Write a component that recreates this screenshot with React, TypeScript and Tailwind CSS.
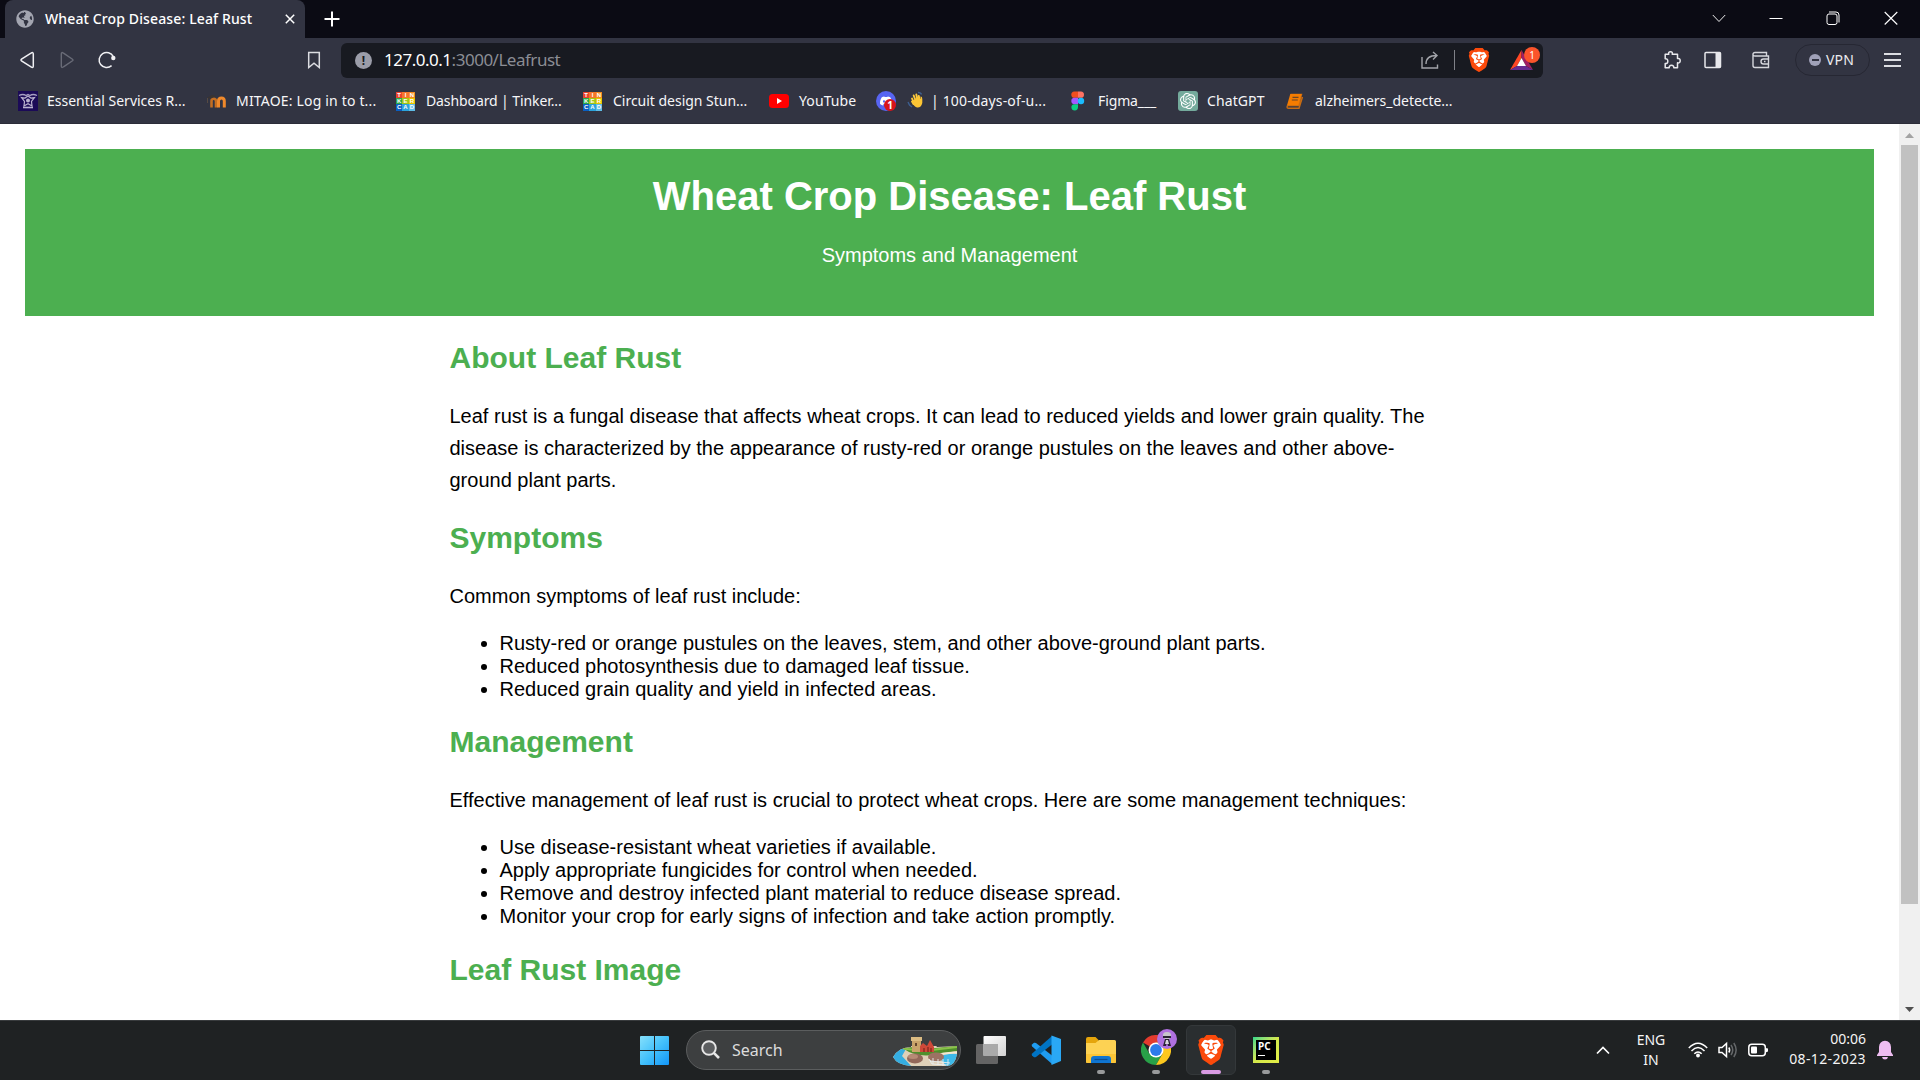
import type { ReactNode } from "react";
import { FaGlobeAmericas } from "react-icons/fa";
import { SiBrave, SiDiscord, SiOpenai } from "react-icons/si";

const UI = "font-['Noto_Sans','Open_Sans',sans-serif]";

function BackIcon() {
  return (
    <svg width="40" height="20" viewBox="0 0 40 20" className="h-5 w-10 shrink-0" fill="none">
      <path d="M14 3.2Q16.300 1.600 16.300 4V16Q16.300 18.400 14 16.800L4.500 10.800Q3.500 10 4.500 9.200Z" stroke="#f0f0f3" strokeWidth="1.5" />
    </svg>
  );
}

function ForwardIcon() {
  return (
    <svg width="40" height="20" viewBox="0 0 40 20" className="h-5 w-10 shrink-0" fill="none">
      <path d="M6.500 3.200Q4.300 1.600 4.300 4V16Q4.300 18.400 6.500 16.800L15.500 10.800Q16.500 10 15.500 9.200Z" stroke="#696b77" strokeWidth="1.4" />
    </svg>
  );
}

function ReloadIcon() {
  return (
    <svg width="20" height="20" viewBox="0 0 20 20" className="h-5 w-5 shrink-0" fill="none">
      <path d="M14.600 15.600A7.500 7.500 0 1 1 16.300 6.500" stroke="#f0f0f3" strokeWidth="1.5" />
      <circle cx="16.300" cy="8" r="2.200" fill="#f0f0f3" />
    </svg>
  );
}

function LionIcon({ className }: { className: string }) {
  return (
    <div className={"relative " + className}>
      <svg viewBox="0 0 24 24" className="absolute inset-0 h-full w-full">
        <path d="M5 4L12 2L19 4L20 8L17 19L12 22L7 19L4 8Z" fill="#fff" />
      </svg>
      <SiBrave className="absolute inset-0 h-full w-full text-[#fb4a0b]" />
    </div>
  );
}

function TinkercadIcon() {
  const cells = [
    ["T", "#e8432c"], ["I", "#f5752a"], ["N", "#f58a1f"],
    ["K", "#2ba84a"], ["E", "#a5c614"], ["R", "#e8c400"],
    ["C", "#0a5fc2"], ["A", "#2ba3dc"], ["D", "#5fbce6"],
  ];
  return (
    <div className="mr-px grid h-[19px] w-[19px] shrink-0 grid-cols-3 grid-rows-3 overflow-hidden font-['Liberation_Sans',sans-serif] text-[6px] leading-[6px] font-bold text-white">
      {cells.map(([c, color]) => (
        <span key={c} className="flex min-h-0 items-center justify-center" style={{ backgroundColor: color }}>{c}</span>
      ))}
    </div>
  );
}

function EssentialIcon() {
  return (
    <svg viewBox="0 0 20 20" className="h-5 w-5">
      <rect width="20" height="20" fill="#1b0a57" />
      <path d="M1 4.500Q5 2.500 8 4.500L10 3.500L12 4.500Q15 2.500 19 4.500" stroke="#a79fc2" strokeWidth="1.300" fill="none" />
      <path d="M3.500 6.500L7 7L10 5L13 7L16.500 6.500L13.500 10.500L14 15L10 12.800L6 15L6.500 10.500Z" stroke="#b9b1cf" strokeWidth="1.200" fill="none" />
      <path d="M5 16.500H15" stroke="#b9b1cf" strokeWidth="1.600" />
      <circle cx="10" cy="9.500" r="2" fill="#b9b1cf" />
    </svg>
  );
}

function MoodleIcon() {
  return (
    <svg viewBox="0 0 20 20" className="h-5 w-5" fill="none">
      <path d="M5.500 16.500V10Q5.500 7.800 7.500 7.800Q10 7.800 10 10V16.500" stroke="#c46e22" strokeWidth="2.600" />
      <path d="M12.500 16.500V10Q12.500 7 15.500 7Q18.300 7 18.300 10V16.500" stroke="#f0892b" strokeWidth="3" />
      <path d="M1 7L6 4L10 5L5 7.500Z" fill="#3b3430" />
      <path d="M1.500 7V12" stroke="#574a42" />
    </svg>
  );
}

function YoutubeIcon() {
  return (
    <svg viewBox="0 0 20 20" className="h-5 w-5">
      <rect y="3" width="20" height="14" rx="3.500" fill="#f00" />
      <path d="M8 7L13 10L8 13Z" fill="#fff" />
    </svg>
  );
}

function DiscordIcon() {
  return (
    <div className="relative flex h-5 w-5 items-center justify-center rounded-full bg-[#5865f2]">
      <SiDiscord className="h-[12px] w-[12px] text-white" />
      <span className={"absolute right-0 bottom-0 flex h-3 w-3 items-center justify-center rounded-full bg-[#d8131b] text-[10px] leading-none font-bold text-white " + UI}>1</span>
    </div>
  );
}

function WaveIcon() {
  return (
    <svg viewBox="0 0 16 18" className="h-[18px] w-4 shrink-0" fill="none">
      <path d="M6.500 11L5 7.500M8 8L6.700 4.500M10.200 7.500L9.300 3.500M12.300 8L11.800 5M6.500 13L5 10.500" stroke="#fcc93d" strokeWidth="1.900" strokeLinecap="round" />
      <path d="M5 10L11 6L13.500 8V5.500Q15.300 5 15.300 8V12Q14 17 10 16.500Q6.500 15.500 5 10Z" fill="#fcc534" />
      <path d="M1 11L2.500 14L5 16M11 1.500Q14 1.500 14.500 3.500" stroke="#3d5f91" strokeWidth="1.400" />
    </svg>
  );
}

function FigmaIcon() {
  return (
    <svg viewBox="0 0 20 20" className="h-5 w-5">
      <path d="M10 .5H6.300a3.170 3.170 0 0 0 0 6.330H10Z" fill="#f24e1e" />
      <path d="M10 .5H13a3.170 3.170 0 0 1 0 6.330H10Z" fill="#ff7262" />
      <path d="M10 6.830H6.300a3.170 3.170 0 0 0 0 6.330H10Z" fill="#a259ff" />
      <circle cx="13" cy="10" r="3.170" fill="#1abcfe" />
      <path d="M6.300 13.160H10v3.170a3.300 3.170 0 1 1-3.700-3.170Z" fill="#0acf83" />
    </svg>
  );
}

function BookIcon() {
  return (
    <svg viewBox="0 0 20 20" className="h-5 w-5">
      <path d="M6.500 3.500H17.500L14.500 14.500H4.500Q3 14.500 3 16Q3 17.300 4.500 17.300H15L18.500 6" fill="none" stroke="#c96c12" strokeWidth="1.400" />
      <path d="M6.300 3H17.500L14.500 14.300H3Z" fill="#f57c00" />
      <path d="M8.500 6.300H14.500M7.800 9H13.800" stroke="#6b4426" strokeWidth="1.200" />
    </svg>
  );
}

function Bookmark({ icon, label, className, textClass }: { icon: ReactNode; label: ReactNode; className: string; textClass: string }) {
  return (
    <div className={"flex shrink-0 items-center " + className}>
      <div className="flex w-5 shrink-0 items-center justify-center">{icon}</div>
      <span className={"ml-[10px] flex items-center pb-[2px] text-[14px] whitespace-nowrap text-[#f6f6f8] " + textClass}>{label}</span>
    </div>
  );
}

function TabStrip() {
  return (
    <div className="flex h-[38px] bg-[#0b0b14] text-white">
      <div className="ml-[5px] flex w-[300px] items-center rounded-t-lg bg-[#323442]">
        <FaGlobeAmericas className="ml-[11px] h-[18px] w-[18px] text-[#a3a5b0]" />
        <span className="ml-[11px] w-[230px] pb-[2px] text-[14px] font-medium tracking-[0.13px] whitespace-nowrap">Wheat Crop Disease: Leaf Rust</span>
        <svg viewBox="0 0 10 10" className="ml-[10px] h-[10px] w-[10px]"><path d="M.8.8L9.200 9.200M9.200.8L.8 9.200" stroke="#fff" strokeWidth="1.500" /></svg>
      </div>
      <div className="flex w-[54px] items-center justify-center">
        <svg viewBox="0 0 16 16" className="h-4 w-4"><path d="M8 .5V15.500M.5 8H15.500" stroke="#fff" strokeWidth="2" /></svg>
      </div>
      <div className="ml-auto flex h-[38px] items-center pr-[22px] pb-[2px]">
        <svg viewBox="0 0 14 14" className="mr-[43px] h-[14px] w-[14px]"><path d="M.8 4L7 10.500L13.200 4" stroke="#eee" fill="none" /></svg>
        <svg viewBox="0 0 14 14" className="mr-[43px] h-[14px] w-[14px]"><path d="M.5 7.500H13.500" stroke="#fff" /></svg>
        <svg viewBox="0 0 14 14" className="mr-[44px] h-[14px] w-[14px]" fill="none" stroke="#fff"><rect x="1" y="3" width="10" height="10.500" rx="2" /><path d="M3 1H10Q13 1 13 4V11.500" /></svg>
        <svg viewBox="0 0 14 14" className="h-[14px] w-[14px]"><path d="M.7 1L13.300 13.500M13.300 1L.7 13.500" stroke="#fff" strokeWidth="1.100" /></svg>
      </div>
    </div>
  );
}

function Toolbar() {
  return (
    <div className="flex h-[45px] items-center bg-[#323442]">
      <div className="mb-px ml-[17px] flex items-center">
        <BackIcon />
        <ForwardIcon />
        <ReloadIcon />
      </div>
      <svg viewBox="0 0 14 18" className="mb-px ml-[190px] h-[18px] w-[14px]" fill="none"><path d="M1.700 1.500H12.300V16.500L7 12.200L1.700 16.500Z" stroke="#dcdde2" strokeWidth="1.500" /></svg>
      <div className="ml-[20px] flex h-[35px] w-[1202px] items-center rounded-md bg-[#181a21]">
        <div className={"ml-[14px] flex h-[17px] w-[17px] items-center justify-center rounded-full bg-[#9b9da9] text-[12px] leading-none font-bold text-[#181a21] " + UI}>!</div>
        <div className="ml-[12px] pb-px text-[17px] tracking-[-0.49px] text-white">
          127.0.0.1<span className="text-[#8b8d94]">:3000/Leafrust</span>
        </div>
        <svg viewBox="0 0 18 18" className="mb-px ml-auto h-[18px] w-[18px]" fill="none" stroke="#a2a4aa" strokeWidth="1.400">
          <path d="M1 6V17H16.500V13.500" /><path d="M5 13Q5 4.500 15.500 4.500M12 1L16 4.500L12 8.500" />
        </svg>
        <div className="mb-px ml-[15px] h-5 w-px bg-[#7f8188]" />
        <LionIcon className="mb-px ml-[12px] h-6 w-6" />
        <div className="relative mr-[10px] mb-px ml-[19px] h-[20px] w-[23px]">
          <svg viewBox="0 0 23 20" className="h-5 w-[23px]">
            <path d="M11.500 0L0 20L7 16L11.500 8Z" fill="#ff4724" />
            <path d="M11.500 0L23 20L16 16L11.500 8Z" fill="#9e1f63" />
            <path d="M0 20H23L16 16H7Z" fill="#662d91" />
            <path d="M11.500 8L7 16H16Z" fill="#fff" />
          </svg>
          <span className={"absolute -top-[3px] left-[14px] flex h-4 w-4 items-center justify-center rounded-full bg-[#fb542b] text-[10px] leading-none text-white " + UI}>1</span>
        </div>
      </div>
      <svg viewBox="0 0 18 18" className="mb-px ml-[120px] h-[18px] w-[18px]" fill="none" stroke="#e8e8ec" strokeWidth="1.500">
        <path d="M2.200 3.200H5.800Q5 .8 7.500 .8Q10 .8 9.200 3.200H14.500V7.500Q17.200 7 17.200 9.700Q17.200 12.300 14.500 11.800V16.800H10.800Q11 14.300 8.500 14.300Q6 14.300 6.200 16.800H2.200V12.500Q4.800 12.800 4.800 10.200Q4.800 7.600 2.200 7.800Z" strokeLinejoin="round" />
      </svg>
      <svg viewBox="0 0 18 18" className="mb-px ml-[23px] h-[18px] w-[18px]"><rect x="1" y="1.500" width="15.500" height="15" rx="1" fill="none" stroke="#e8e8ec" strokeWidth="1.500" /><rect x="11.500" y="1.500" width="5" height="15" fill="#e8e8ec" /></svg>
      <svg viewBox="0 0 18 18" className="mb-px ml-[30px] h-[18px] w-[18px]" fill="none" stroke="#d5d6dc" strokeWidth="1.400">
        <path d="M1 3V14.500Q1 16.500 3 16.500H16.500V5H3Q1 5 1 3.200Q1 1.500 3 1.500H14.500V5" /><path d="M16.500 8H11.500Q9 8 9 10.500Q9 13 11.500 13H16.500M12 10.500H13.500" />
      </svg>
      <div className="mb-px ml-[25px] flex h-[32px] w-[75px] items-center rounded-full border border-[#262733]">
        <div className="ml-[13px] flex h-3 w-3 items-center justify-center rounded-full bg-[#a0a1b8]"><div className="h-[2px] w-[7px] bg-[#323442]" /></div>
        <span className="ml-[5px] pb-[2px] text-[14px] tracking-[0.2px] text-[#ececf0]">VPN</span>
      </div>
      <div className="mb-px ml-[14px] flex w-[17px] flex-col gap-[4.500px]">
        <div className="h-[1.500px] bg-[#dcdde2]" /><div className="h-[1.500px] bg-[#dcdde2]" /><div className="h-[1.500px] bg-[#dcdde2]" />
      </div>
    </div>
  );
}

function BookmarksBar() {
  return (
    <div className="flex h-[41px] items-start border-b border-[#2b2c38] bg-[#323442] pt-[8px] pl-[18px]">
      <div className="flex h-5 items-center">
        <Bookmark icon={<EssentialIcon />} label="Essential Services R..." className="w-[188px]" textClass="tracking-[0px] -translate-x-px" />
        <Bookmark icon={<MoodleIcon />} label="MITAOE: Log in to t..." className="w-[190px]" textClass="tracking-[0.18px]" />
        <Bookmark icon={<TinkercadIcon />} label="Dashboard | Tinker..." className="w-[187px]" textClass="tracking-[-0.1px]" />
        <Bookmark icon={<TinkercadIcon />} label="Circuit design Stun..." className="w-[186px]" textClass="tracking-[-0.02px]" />
        <Bookmark icon={<YoutubeIcon />} label="YouTube" className="w-[107px]" textClass="tracking-[0.1px]" />
        <Bookmark icon={<DiscordIcon />} label={<><WaveIcon /><span className="ml-[8px]">| 100-days-of-u...</span></>} className="w-[192px]" textClass="tracking-[0.15px] pl-[1px]" />
        <Bookmark icon={<FigmaIcon />} label="Figma___" className="w-[110px]" textClass="tracking-[-0.12px]" />
        <Bookmark icon={<div className="flex h-5 w-5 items-center justify-center rounded-[3px] bg-[#74aa9c]"><SiOpenai className="h-4 w-4 text-white" /></div>} label="ChatGPT" className="w-[106px]" textClass="tracking-[0.1px] -translate-x-px" />
        <Bookmark icon={<BookIcon />} label="alzheimers_detecte..." className="w-[180px]" textClass="tracking-[-0.04px] pl-px" />
      </div>
    </div>
  );
}

function H2({ children, tight }: { children: ReactNode; tight?: boolean }) {
  return <h2 className={"mb-[25px] text-[30px] leading-[34px] font-bold text-[#4caf50] " + (tight ? "mt-6" : "mt-[25px]")}>{children}</h2>;
}

function Para({ children }: { children: ReactNode }) {
  return <p className="my-5 text-[20px] leading-8 whitespace-nowrap">{children}</p>;
}

function List({ items }: { items: string[] }) {
  return (
    <ul className="my-5 list-disc pl-[50px] text-[20px] leading-[23px]">
      {items.map((t) => <li key={t}>{t}</li>)}
    </ul>
  );
}

function Page() {
  return (
    <div className="flex h-[896px] overflow-hidden bg-white">
      <main className="w-[1899px] overflow-hidden p-[25px] font-['Liberation_Sans',Arial,sans-serif] text-black">
        <header className="flex h-[167px] flex-col items-center bg-[#4caf50] pt-[25px] text-white">
          <h1 className="text-[40px] leading-[45px] font-bold">Wheat Crop Disease: Leaf Rust</h1>
          <p className="mt-[20px] text-[20px] leading-8">Symptoms and Management</p>
        </header>
        <article className="mx-auto w-[1000px]">
          <H2>About Leaf Rust</H2>
          <Para>
            Leaf rust is a fungal disease that affects wheat crops. It can lead to reduced yields and lower grain quality. The<br />
            disease is characterized by the appearance of rusty-red or orange pustules on the leaves and other above-<br />
            ground plant parts.
          </Para>
          <H2>Symptoms</H2>
          <Para>Common symptoms of leaf rust include:</Para>
          <List items={["Rusty-red or orange pustules on the leaves, stem, and other above-ground plant parts.", "Reduced photosynthesis due to damaged leaf tissue.", "Reduced grain quality and yield in infected areas."]} />
          <H2 tight>Management</H2>
          <Para>Effective management of leaf rust is crucial to protect wheat crops. Here are some management techniques:</Para>
          <List items={["Use disease-resistant wheat varieties if available.", "Apply appropriate fungicides for control when needed.", "Remove and destroy infected plant material to reduce disease spread.", "Monitor your crop for early signs of infection and take action promptly."]} />
          <H2>Leaf Rust Image</H2>
        </article>
      </main>
      <div className="flex w-[21px] flex-col items-center bg-[#f0f0f0]">
        <svg viewBox="0 0 21 21" className="h-[21px] w-[21px] shrink-0"><path d="M6 14L10.500 9L15 14Z" fill="#a3a3a3" /></svg>
        <div className="h-[759px] w-[17px] bg-[#c1c1c1]" />
        <svg viewBox="0 0 21 21" className="mt-auto h-[21px] w-[21px] shrink-0"><path d="M6 8L10.500 13L15 8Z" fill="#505050" /></svg>
      </div>
    </div>
  );
}

function CastleIcon() {
  return (
    <svg viewBox="0 0 64 30" className="h-[30px] w-16">
      <defs><clipPath id="scene"><path d="M0 20Q6 10 18 10V0H30V6L38 2L44 10L64 9V17Q62 29 54 29H18Q4 28 0 20Z" /></clipPath></defs>
      <g clipPath="url(#scene)">
        <rect y="9" width="64" height="21" fill="#dfd0b8" />
        <path d="M0 20Q5 10 13 12L9 19L19 30H0Z" fill="#35aee2" />
        <path d="M11 12Q20 8 32 12L64 9V14L40 18Q22 20 11 12Z" fill="#4f8f2c" />
        <path d="M10 11.500L30 14L64 10" stroke="#8bc34a" strokeWidth="2" fill="none" />
        <path d="M46 20Q54 16 64 17V30H54Z" fill="#3db9e8" />
        <path d="M40 19Q52 15 64 15.500" stroke="#f3e8d0" strokeWidth="2" fill="none" />
        <path d="M19 1H28V15H19Z" fill="#c9a36a" /><path d="M18 0H29V4H18Z" fill="#dcbc83" />
        <path d="M22 6h2v3h-2Z" fill="#67472d" />
        <path d="M27 9L30 6L34 9L37 3L41 10V15H27Z" fill="#cf4838" />
        <path d="M31 11v4M35 10v5M38 11v4" stroke="#84291f" strokeWidth="1.300" />
      </g>
      <ellipse cx="22" cy="21.500" rx="8" ry="5" fill="#93685a" /><ellipse cx="20" cy="19.500" rx="5" ry="2.500" fill="#b68b75" />
      <ellipse cx="43" cy="20" rx="8" ry="4.500" fill="#9c7263" />
      <path d="M36 22L39 27L55 28M37 24L57 26M40 21V27M45 22V28M50 22V29M55 22V28" stroke="#e9eef1" strokeWidth=".9" fill="none" />
    </svg>
  );
}

function TaskCell({ children, dot }: { children: ReactNode; dot?: boolean }) {
  return (
    <div className="relative flex h-[60px] w-[55px] items-center justify-center pl-px">
      {children}
      {dot && <span className="absolute bottom-[6px] left-[24px] h-1 w-2 rounded-full bg-[#989a9b]" />}
    </div>
  );
}

function Taskbar() {
  return (
    <div className="flex h-[60px] items-center bg-[#1f2223] shadow-[inset_0_1px_0_#383b3d]">
      <svg viewBox="0 0 29 29" className="mt-px ml-[640px] h-[29px] w-[29px] shrink-0">
        <defs><linearGradient id="win" x1="0" y1="0" x2="29" y2="29" gradientUnits="userSpaceOnUse"><stop stopColor="#86e0fb" /><stop offset=".5" stopColor="#44c1fb" /><stop offset="1" stopColor="#1296f8" /></linearGradient></defs>
        <path d="M1 0H14V14H0V1Q0 0 1 0ZM15 0H28Q29 0 29 1V14H15ZM0 15H14V29H1Q0 29 0 28ZM15 15H29V28Q29 29 28 29H15Z" fill="url(#win)" />
      </svg>
      <div className="ml-[17px] flex h-10 w-[275px] shrink-0 items-center rounded-full border border-[#5b5d5e] bg-[#3d3f40]">
        <svg viewBox="0 0 20 20" className="ml-[14px] h-5 w-5" fill="none"><circle cx="8" cy="8" r="6.800" stroke="#e7e7e7" strokeWidth="1.900" fill="#5c5e60" /><path d="M12.800 12.800L18 18" stroke="#e7e7e7" strokeWidth="2.600" /></svg>
        <span className="ml-[11px] text-[16px] text-[#dcdcdc]">Search</span>
        <div className="mt-[3px] mr-[3px] ml-auto"><CastleIcon /></div>
      </div>
      <div className="ml-[2px] flex shrink-0">
        <TaskCell>
          <svg viewBox="0 0 30 28" className="h-7 w-[30px]">
            <defs><linearGradient id="tv" x1="0" y1="0" x2="1" y2="1"><stop stopColor="#fff" /><stop offset="1" stopColor="#d2d2d2" /></linearGradient></defs>
            <rect y="8" width="22" height="20" rx="1.500" fill="#646464" /><rect x="7.500" width="22.500" height="20" rx="1" fill="url(#tv)" /><path d="M7.500 8H22V20H7.500Z" fill="#aaa" />
          </svg>
        </TaskCell>
        <TaskCell>
          <svg viewBox="0 0 30 30" className="h-[30px] w-[30px]">
            <path d="M1 9.500L3 7.800Q4 7.500 5 8L21 20.500V29L1.200 11.500Q.3 10.500 1 9.500Z" fill="#1f9cf0" />
            <path d="M1 20.500L3 22.200Q4 22.500 5 22L21 9.500V1L1.200 18.500Q.3 19.500 1 20.500Z" fill="#0074c4" />
            <path d="M20.500 .5L30 4V26L20.500 30V20.500V9.500Z" fill="#2aa8f5" />
          </svg>
        </TaskCell>
        <TaskCell dot>
          <svg viewBox="0 -1 30 28" className="h-7 w-[30px]">
            <path d="M0 6V2Q0 0 2 0H9.500L12.500 3V8H0Z" fill="#e5a50b" /><path d="M0 6H9.500L13 3H28.500Q30 3 30 4.500V25Q30 26 28.500 26H1.500Q0 26 0 24.500Z" fill="#fdd253" /><path d="M0 17H30V25Q30 26 28.500 26H1.500Q0 26 0 24.500Z" fill="#fbc536" /><path d="M5 26V22Q5 19 8 19H22Q25 19 25 22V26Z" fill="#0f75d1" /><path d="M8.500 22.500H21.500" stroke="#0a4e93" strokeWidth="1.200" />
          </svg>
        </TaskCell>
        <TaskCell dot>
          <div className="relative">
            <svg viewBox="0 0 30 30" className="h-[30px] w-[30px]">
              <path d="M15 15L2 7.500A15 15 0 0 1 28 7.500H15Z" fill="#e33b2e" />
              <path d="M15 15L8.500 18.750L2 7.500A15 15 0 0 0 15 30L21.500 18.750Z" fill="#28a148" />
              <path d="M15 7.500H28A15 15 0 0 1 15 30L21.500 18.750Z" fill="#fcc81e" />
              <circle cx="15" cy="15" r="7.500" fill="#fff" /><circle cx="15" cy="15" r="5.900" fill="#2c7bea" />
            </svg>
            <svg viewBox="0 0 20 20" className="absolute -top-[6px] left-[16px] h-5 w-5">
              <circle cx="10" cy="10" r="10" fill="#b070e0" /><path d="M6 8Q5 3 10 3Q15 3 14 8L12 10H8Z" fill="#c7c4cc" /><path d="M6 7H14V9H6ZM8 10L12 10L14 17H11L10 13L9 17H6Z" fill="#292333" /><path d="M9 11h2l1 4h-4Z" fill="#d9d5dd" />
            </svg>
          </div>
        </TaskCell>
        <div className="relative mr-[2px] ml-[3px] flex h-[50px] w-[50px] items-center justify-center self-center rounded-md border border-[#34383a] bg-[#2a2e30]">
          <LionIcon className="h-[30px] w-[30px]" />
          <span className="absolute bottom-0 left-[14px] h-1 w-5 rounded-full bg-[#d99be3]" />
        </div>
        <TaskCell dot>
          <div className="flex h-[26px] w-[26px] items-center justify-center bg-linear-to-br from-[#21d789] via-[#d4e84b] to-[#e2ee45]">
            <div className={"flex h-5 w-5 flex-col bg-black pl-[2px] text-[10px] leading-[12px] font-bold text-white " + UI}>PC<span className="mt-[3px] h-[1px] w-[7px] bg-white" /></div>
          </div>
        </TaskCell>
      </div>
      <div className="ml-auto flex shrink-0 items-center text-[#f5f5f5]">
        <svg viewBox="0 0 14 9" className="h-[9px] w-[14px]"><path d="M1 7.500L7 1.500L13 7.500" fill="none" stroke="#fff" strokeWidth="1.700" /></svg>
        <div className="ml-[25px] w-8 text-center text-[14px] leading-5 tracking-[-0.05px]">ENG<br />IN</div>
        <svg viewBox="0 0 20 16" className="ml-[21px] h-4 w-5" fill="none" stroke="#fff" strokeWidth="1.500"><path d="M.8 6Q10-3.500 19.200 6M3.500 9Q10 2.200 16.500 9M6.300 11.800Q10 8 13.700 11.800" /><circle cx="10" cy="13.500" r="1.900" fill="#fff" stroke="none" /></svg>
        <svg viewBox="0 0 20 18" className="ml-[10px] h-[18px] w-5" fill="none" strokeWidth="1.500"><path d="M1 6.500H4L8.500 2.500V15.500L4 11.500H1Z" stroke="#fff" /><path d="M10.800 6.500Q12.500 9 10.800 11.500" stroke="#fff" /><path d="M13 4Q16.500 9 13 14M15.800 2Q20.500 9 15.800 16" stroke="#65686a" /></svg>
        <svg viewBox="0 0 21 14" className="ml-[10px] h-[14px] w-[21px]"><rect x=".8" y="1.200" width="16.500" height="11.600" rx="3" fill="none" stroke="#fff" strokeWidth="1.500" /><rect x="3" y="3.500" width="6" height="7" rx="1" fill="#fff" /><path d="M17.500 5L20 5.500V8.500L17.500 9.500Z" fill="#fff" /></svg>
        <div className="ml-[15px] w-[82px] pb-[2px] text-right text-[14px] leading-5 tracking-[0.37px] whitespace-nowrap"><span className="tracking-[0px]">00:06</span><br />08-12-2023</div>
        <svg viewBox="0 0 16 20" className="mr-[27px] ml-[11px] h-5 w-4" fill="#eebdf1"><path d="M2 12V7Q2.500 1 8 .8Q13.500 1 14 7V12L16 15V16H0V15ZM5 17H11Q10.500 19.500 8 19.500Q5.500 19.500 5 17Z" /></svg>
      </div>
    </div>
  );
}

export default function App() {
  return (
    <div className={"flex h-[1080px] w-[1920px] flex-col overflow-hidden " + UI}>
      <TabStrip />
      <Toolbar />
      <BookmarksBar />
      <Page />
      <Taskbar />
    </div>
  );
}
